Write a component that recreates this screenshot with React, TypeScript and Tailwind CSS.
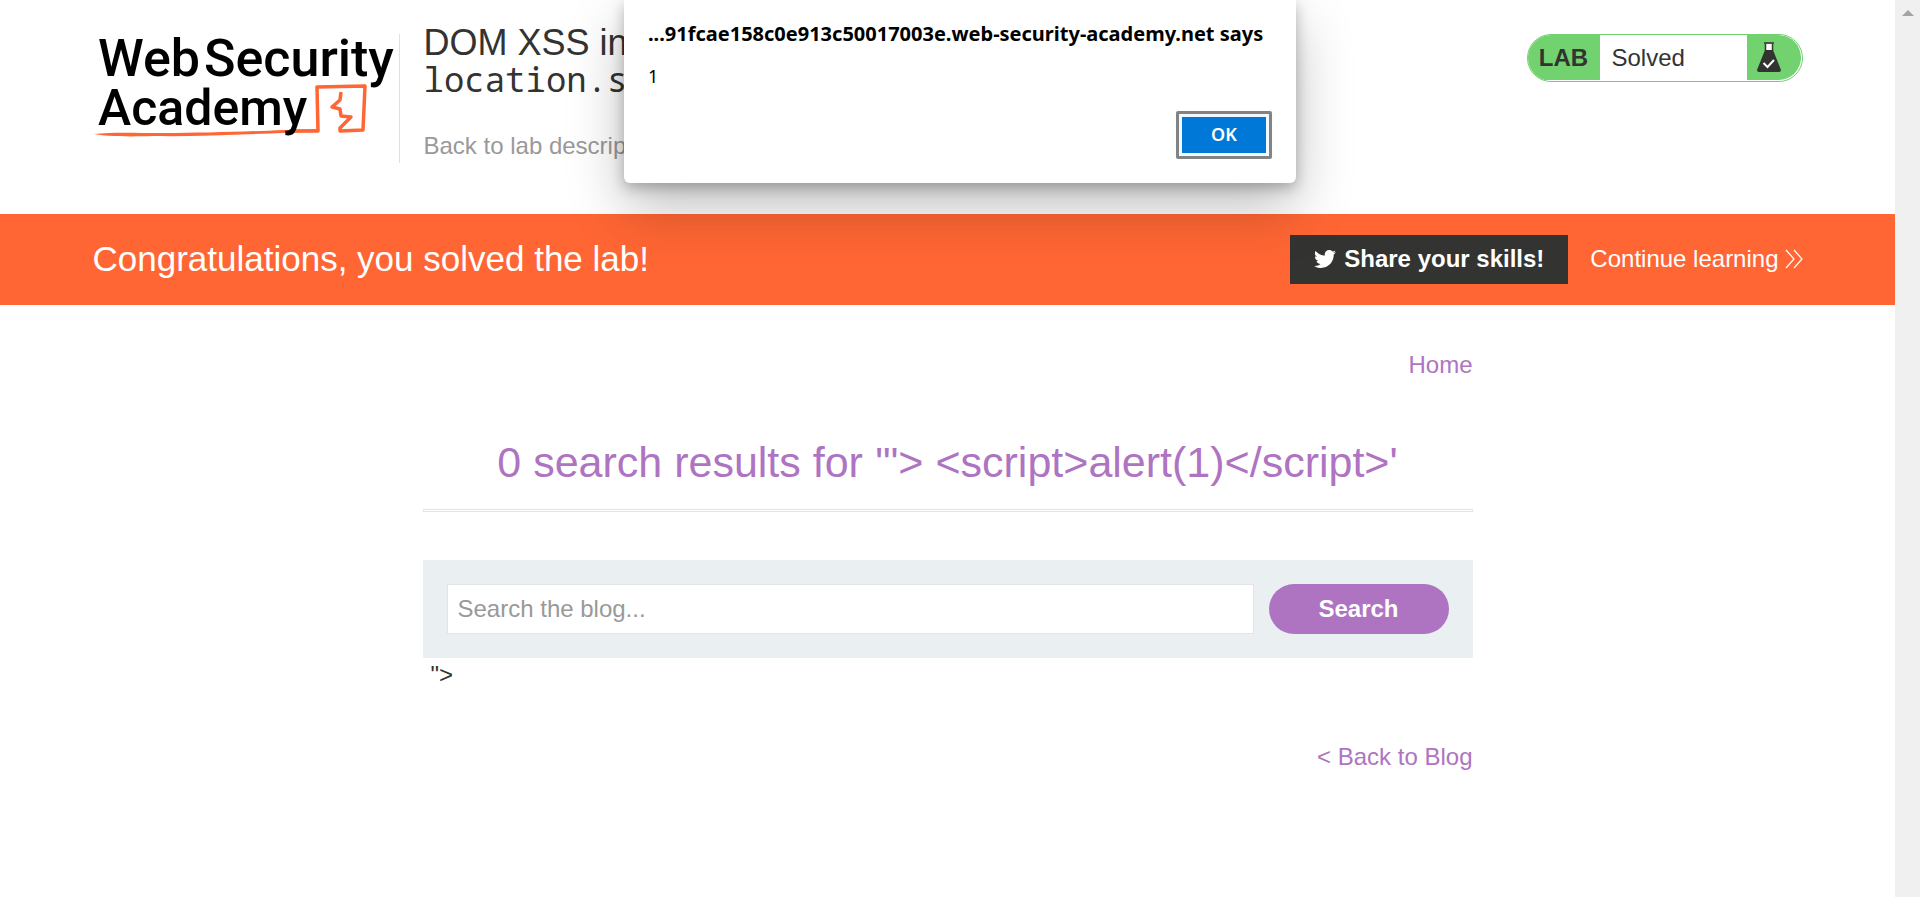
import { FaTwitter } from "react-icons/fa";

function Logo() {
  return (
    <a href="#academy" aria-label="Web Security Academy" className="block">
      <svg width="302" height="106" viewBox="0 0 302 106" className="block overflow-visible">
        <path d="M1 100 C20 98 40 99 70 99 C120 99 160 97 226 95 V98 C170 99 110 103 60 102 C30 103 12 102 1 100Z" fill="#ff6633" />
        <path
          d="M196 97 L225 97 L224 53 L272 52 L270 96 L247 97 V94 L258 83 L248 82 L247 75 L239 73 L247 66 L248 58"
          fill="none"
          stroke="#ff6633"
          strokeWidth="3.5"
          strokeLinejoin="round"
        />
        <g fontFamily="Roboto, sans-serif" fontWeight="500" fontSize="52" fill="#000">
          <text x="5" y="42">Web</text>
          <text x="111" y="42">Security</text>
          <text x="5" y="91" fontSize="50">Academy</text>
        </g>
      </svg>
    </a>
  );
}

function Flask() {
  return (
    <svg width="24" height="31" viewBox="0 0 24 31" className="block" aria-hidden="true">
      <path d="M8 2 H16 V10 H8Z" fill="#fff" />
      <path d="M7 1 H17 M8.500 2 V9 M15.500 2 V9" stroke="#333332" fill="none" strokeWidth="1.500" />
      <path d="M8 8 H16 L24 28 Q24 30 22 30 H2 Q0 30 0 28Z" fill="#333332" />
      <path d="M6.500 21 L10.500 25 L17 18" stroke="#fff" fill="none" strokeWidth="2" />
    </svg>
  );
}

function LabHeader() {
  return (
    <header className="mx-auto flex w-full max-w-[1710px] items-start justify-between pt-[34px] pb-[51px]">
      <div className="flex">
        <Logo />
        <div className="ml-1 flex h-[129px] flex-col border-l border-[#e0e0e0] pb-px pl-6">
          <h2 className="-mt-[9px] text-[36px] leading-[36px] text-[#333332]">
            DOM XSS in <br />
            <span className="font-['Noto_Sans_Mono','DejaVu_Sans_Mono',monospace] text-[34px]">location.s</span>
          </h2>
          <a href="#description" className="mt-auto text-[24px] leading-8 text-[#999]">
            Back to lab descrip
          </a>
        </div>
      </div>
      <div className="flex h-12 overflow-hidden rounded-full border border-[#72d26f] pb-px pr-px text-[24px] text-[#333332]">
        <p className="flex w-[72px] items-center justify-center bg-[#72d26f] font-bold">LAB</p>
        <p className="flex w-[147px] items-center pl-3">Solved</p>
        <span className="flex w-[54px] items-center rounded-r-full bg-[#72d26f] pl-2.5">
          <Flask />
        </span>
      </div>
    </header>
  );
}

function SolvedBanner() {
  return (
    <section className="bg-[#ff6633] text-white">
      <div className="mx-auto flex h-[91px] w-full max-w-[1710px] items-center justify-between">
        <h4 className="text-[35px]">Congratulations, you solved the lab!</h4>
        <div className="flex items-center gap-[22px] text-[24px]">
          <button type="button" className="flex h-[49px] items-center gap-2 bg-[#333332] px-6 pb-0.5 font-bold">
            <FaTwitter size={22} />
            Share your skills!
          </button>
          <a href="#continue" className="flex items-center gap-1.5 pb-0.5">
            Continue learning
            <svg width="18" height="20" viewBox="0 0 18 20" fill="none" stroke="#fff" strokeWidth="1.200" aria-hidden="true">
              <path d="M1 1 L9 10 L1 19 M9 1 L17 10 L9 19" />
            </svg>
          </a>
        </div>
      </div>
    </section>
  );
}

function Blog() {
  return (
    <main className="mx-auto w-full max-w-[1050px] pt-11 text-[24px] leading-8 text-[#333332]">
      <nav className="flex justify-end">
        <a href="#home" className="text-[#ae74c2]">Home</a>
      </nav>
      <h1 className="mt-14 text-center text-[43px] leading-[50px] text-[#ae74c2]">
        {"0 search results for '\"> <script>alert(1)</script>'"}
      </h1>
      <hr className="mt-[22px] h-[3px] border border-[#e4e4e4]" />
      <form className="mt-12 flex gap-[15px] bg-[#eaeff2] p-6">
        <input
          type="text"
          aria-label="Search the blog"
          placeholder="Search the blog..."
          className="h-[50px] min-w-0 flex-1 border border-[#e4e4e4] bg-white px-2.5 placeholder:text-[#999] focus:outline-none"
        />
        <button type="button" className="h-[50px] w-[180px] rounded-full bg-[#ae74c2] font-bold text-white">
          Search
        </button>
      </form>
      <p className="pt-px pl-2">{'">'}</p>
      <div className="mt-[50px] flex justify-end">
        <a href="#blog" className="text-[#ae74c2]">&lt; Back to Blog</a>
      </div>
    </main>
  );
}

function AlertDialog() {
  return (
    <div
      role="alertdialog"
      aria-labelledby="alert-title"
      aria-describedby="alert-text"
      className="absolute top-0 left-1/2 flex h-[183px] w-[672px] -translate-x-1/2 flex-col rounded-b-md bg-white px-6 pt-5 pb-6 font-['Noto_Sans',sans-serif] text-black shadow-[0_5px_14px_rgba(0,0,0,0.25),0_24px_56px_rgba(0,0,0,0.25)]"
    >
      <h3 id="alert-title" className="text-[20px] leading-7 font-bold whitespace-nowrap">
        ...91fcae158c0e913c50017003e.web-security-academy.net says
      </h3>
      <p id="alert-text" className="mt-4 text-[18px] leading-6">1</p>
      <button
        type="button"
        className="mt-auto h-12 w-24 self-end rounded-xs border-3 border-[#838383] bg-[#f3f9ff] p-[3px] text-[18px] font-semibold text-white"
      >
        <span className="flex h-full items-center justify-center bg-[#0078d7] pb-0.5">OK</span>
      </button>
    </div>
  );
}

export default function App() {
  return (
    <div className="relative flex min-h-screen bg-white font-['Liberation_Sans',Arial,sans-serif]">
      <div className="min-w-0 flex-1">
        <LabHeader />
        <SolvedBanner />
        <Blog />
      </div>
      <div className="flex w-[25px] justify-center bg-[#f0f0f0] pt-2.5" aria-hidden="true">
        <svg width="12" height="6" viewBox="0 0 12 6">
          <path d="M0 6 L6 0 L12 6Z" fill="#a3a3a3" />
        </svg>
      </div>
      <AlertDialog />
    </div>
  );
}
